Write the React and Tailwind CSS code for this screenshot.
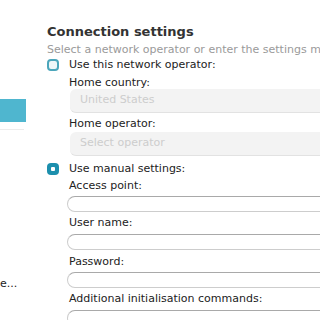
export default function App() {
  const font = { fontFamily: '"DejaVu Sans", Verdana, sans-serif' };
  const Label = ({ children }) => (
    <div className="h-[14px] leading-[14px] text-[11px] text-[#222] whitespace-nowrap pl-[22px]">{children}</div>
  );
  const Disabled = ({ children }) => (
    <div className="ml-[23px] h-[24px] w-[300px] rounded-[6px] bg-[#f3f3f3] border-b border-[#e2e2e2] pl-[10px] flex items-center text-[11px] text-[#cdcdcd] whitespace-nowrap">{children}</div>
  );
  const Manual = () => (
    <div className="ml-[20px] h-[16px] w-[300px] rounded-[8px] bg-white border border-[#cdcdcd] border-t-[#a9a9a9]" />
  );
  return (
    <div className="w-[320px] h-[320px] overflow-hidden bg-white flex" style={font}>
      <div className="w-[26px] shrink-0 flex flex-col">
        <div className="h-[99px]" />
        <div className="h-[23px] bg-[#4fb6cf]" />
        <div className="h-[7px]" />
        <div className="h-px w-[24px] bg-[#ececec]" />
        <div className="h-[147px]" />
        <div className="text-[11px] leading-[14px] text-[#222] whitespace-nowrap">e...</div>
      </div>
      <div className="ml-[21px] flex-1 min-w-0 flex flex-col pt-[22px]">
        <div className="h-[20px] leading-[20px] text-[13px] font-bold text-[#333] whitespace-nowrap">Connection settings</div>
        <div className="mt-[1px] h-[14px] leading-[14px] text-[11px] text-[#9a9a9a] whitespace-nowrap">Select a network operator or enter the settings manually</div>
        <div className="mt-[1px] h-[14px] flex items-center gap-[10px] whitespace-nowrap">
          <div className="w-[12px] h-[12px] rounded-[4px] border-2 border-[#4ba6bb] bg-[#eef6f8] shrink-0" />
          <span className="text-[11px] text-[#222]">Use this network operator:</span>
        </div>
        <div className="mt-[4px]"><Label>Home country:</Label></div>
        <div className="mt-[-1px]"><Disabled>United States</Disabled></div>
        <div className="mt-[4px]"><Label>Home operator:</Label></div>
        <div className="mt-[1px]"><Disabled>Select operator</Disabled></div>
        <div className="mt-[6px] h-[14px] flex items-center gap-[10px] whitespace-nowrap">
          <div className="w-[12px] h-[12px] rounded-[4px] bg-[#1c8fad] shrink-0 flex items-center justify-center">
            <div className="w-[4px] h-[4px] rounded-[1px] bg-white" />
          </div>
          <span className="text-[11px] text-[#222]">Use manual settings:</span>
        </div>
        <div className="mt-[3px]"><Label>Access point:</Label></div>
        <div className="mt-[3px]"><Manual /></div>
        <div className="mt-[4px]"><Label>User name:</Label></div>
        <div className="mt-[4px]"><Manual /></div>
        <div className="mt-[5px]"><Label>Password:</Label></div>
        <div className="mt-[3px]"><Manual /></div>
        <div className="mt-[4px]"><Label>Additional initialisation commands:</Label></div>
        <div className="mt-[4px]"><Manual /></div>
      </div>
    </div>
  );
}
